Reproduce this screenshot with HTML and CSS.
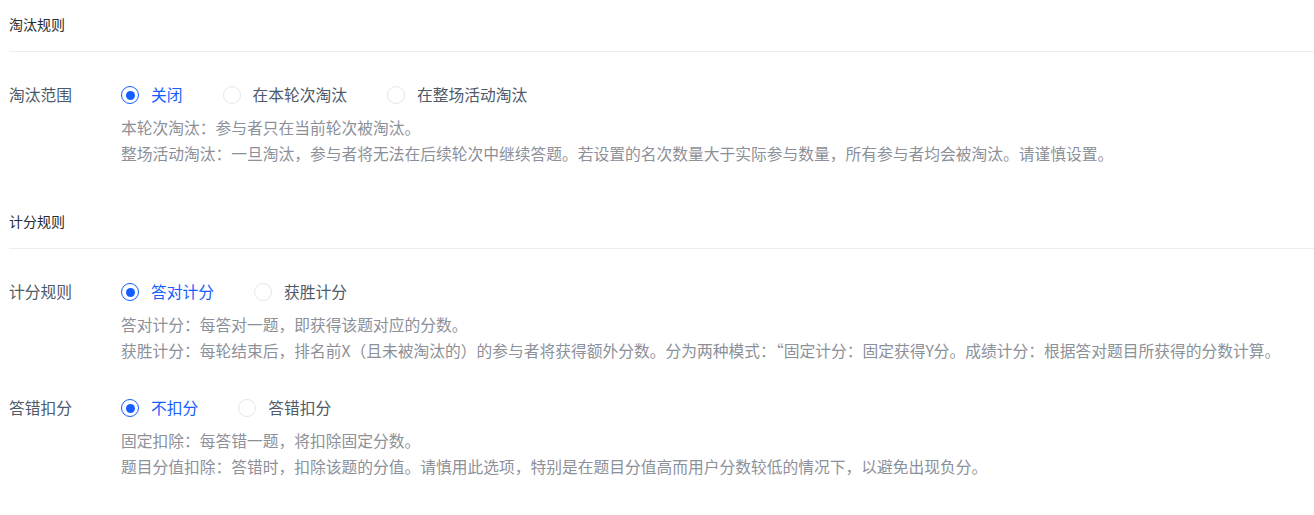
FILE: index.html
```html
<html>
<head>
	<meta charset="utf-8">
	<link rel="stylesheet" href="styles.css">
</head>
<body>
<div class="page">

	<div class="section">
		<div class="section-title">淘汰规则</div>

		<div class="form-item">
			<div class="form-label">淘汰范围</div>
			<div class="form-content">
				<div class="radio-group">
					<label class="radio checked"><span class="radio-mask"></span><span class="radio-text">关闭</span></label>
					<label class="radio"><span class="radio-mask"></span><span class="radio-text">在本轮次淘汰</span></label>
					<label class="radio"><span class="radio-mask"></span><span class="radio-text">在整场活动淘汰</span></label>
				</div>
				<div class="help">
					<div>本轮次淘汰：参与者只在当前轮次被淘汰。</div>
					<div>整场活动淘汰：一旦淘汰，参与者将无法在后续轮次中继续答题。若设置的名次数量大于实际参与数量，所有参与者均会被淘汰。请谨慎设置。</div>
				</div>
			</div>
		</div>
	</div>

	<div class="section">
		<div class="section-title">计分规则</div>

		<div class="form-item">
			<div class="form-label">计分规则</div>
			<div class="form-content">
				<div class="radio-group">
					<label class="radio checked"><span class="radio-mask"></span><span class="radio-text">答对计分</span></label>
					<label class="radio"><span class="radio-mask"></span><span class="radio-text">获胜计分</span></label>
				</div>
				<div class="help">
					<div>答对计分：每答对一题，即获得该题对应的分数。</div>
					<div>获胜计分：每轮结束后，排名前X（且未被淘汰的）的参与者将获得额外分数。分为两种模式：“固定计分：固定获得Y分。成绩计分：根据答对题目所获得的分数计算。</div>
				</div>
			</div>
		</div>

		<div class="form-item">
			<div class="form-label">答错扣分</div>
			<div class="form-content">
				<div class="radio-group">
					<label class="radio checked"><span class="radio-mask"></span><span class="radio-text">不扣分</span></label>
					<label class="radio"><span class="radio-mask"></span><span class="radio-text">答错扣分</span></label>
				</div>
				<div class="help">
					<div>固定扣除：每答错一题，将扣除固定分数。</div>
					<div>题目分值扣除：答错时，扣除该题的分值。请慎用此选项，特别是在题目分值高而用户分数较低的情况下，以避免出现负分。</div>
				</div>
			</div>
		</div>
	</div>

</div>
</body>
</html>
```

FILE: styles.css
```css
body {
	margin: 0;
	background: #fff;
	font-family: "Microsoft YaHei", "Noto Sans CJK SC", "Noto Sans", sans-serif;
}
.page {
	padding: 0 0 0 9px;
}
.section + .section {
	margin-top: 30px;
}
.section-title {
	font-size: 14px;
	line-height: 20px;
	color: #272b33;
	padding: 14px 0 17px;
	border-bottom: 1px solid #ebedf0;
}
.form-item {
	display: flex;
	margin-top: 27px;
}
.form-item + .form-item {
	margin-top: 28px;
}
.form-label {
	width: 112px;
	flex: none;
	font-size: 15.75px;
	line-height: 32px;
	color: #4e5969;
}
.form-content {
	flex: 1;
}
.radio-group {
	display: flex;
	align-items: center;
	height: 32px;
}
.radio {
	display: flex;
	align-items: center;
	margin-right: 40px;
	cursor: pointer;
}
.radio-mask {
	width: 16px;
	height: 16px;
	border: 1px solid #e5e6eb;
	border-radius: 50%;
	margin-right: 12px;
	position: relative;
	flex: none;
}
.radio.checked .radio-mask {
	border-color: #165dff;
}
.radio.checked .radio-mask::after {
	content: "";
	position: absolute;
	left: 3.5px;
	top: 3.5px;
	width: 9px;
	height: 9px;
	border-radius: 50%;
	background: #165dff;
}
.radio-text {
	font-size: 15.75px;
	line-height: 22px;
	color: #4e5969;
}
.radio.checked .radio-text {
	color: #165dff;
}
.help {
	margin-top: 4px;
	font-size: 15.75px;
	line-height: 26px;
	color: #8c9099;
	white-space: nowrap;
}
```
